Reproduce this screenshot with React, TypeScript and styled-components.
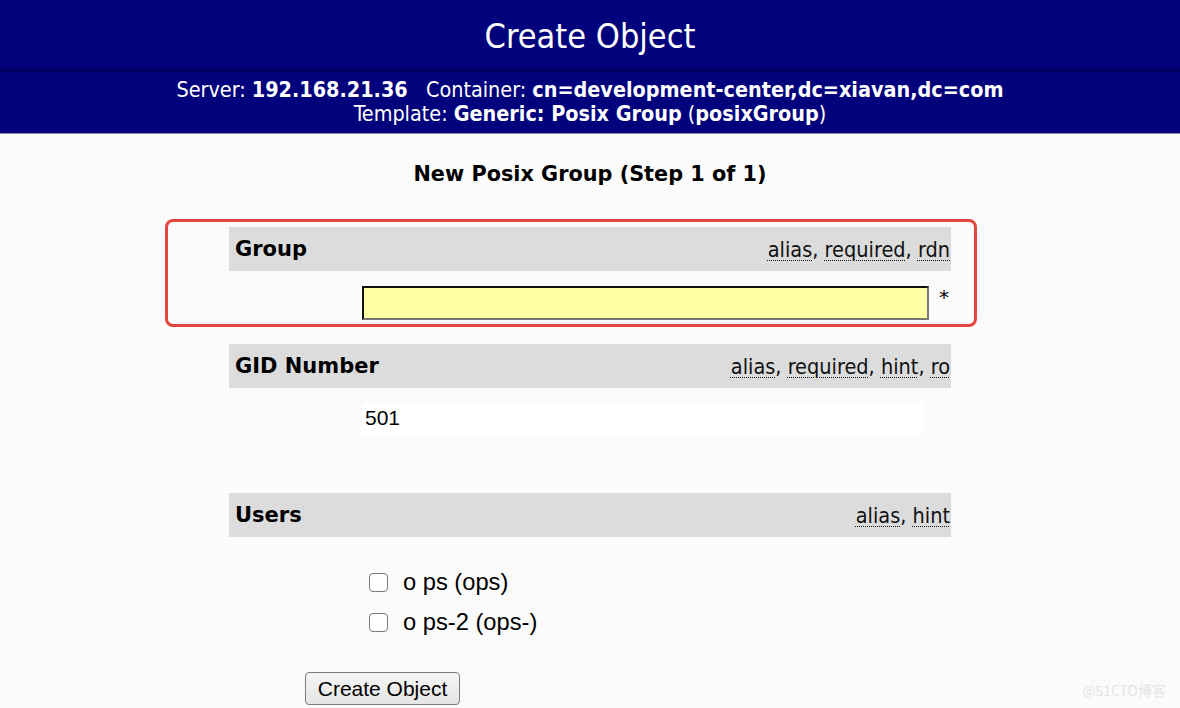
import React from "react";
import styled, { createGlobalStyle } from "styled-components";

const Global = createGlobalStyle`
  html, body { margin: 0; padding: 0; }
  body {
    background: #fbfbfb;
    font-family: "DejaVu Sans", Verdana, sans-serif;
    color: #000;
    width: 1180px;
    height: 708px;
    overflow: hidden;
  }
`;

const Page = styled.div`
  position: relative;
  width: 1180px;
  height: 708px;
`;

const Header = styled.header`
  display: flex;
  flex-direction: column;
  background: #02027c;
  color: #fff;
  border-bottom: 1px solid #8a8a9a;
`;

const TitleBar = styled.div`
  height: 68px;
  display: flex;
  align-items: center;
  justify-content: center;
  font-family: "DejaVu Sans Condensed", "DejaVu Sans", sans-serif;
  font-size: 34px;
  padding-top: 4px;
  box-sizing: border-box;
`;

const Divider = styled.div`
  height: 4px;
  background: linear-gradient(#00005a, #000066);
`;

const InfoBar = styled.div`
  height: 61px;
  box-sizing: border-box;
  padding-top: 6px;
  display: flex;
  flex-direction: column;
  align-items: center;
  font-family: "DejaVu Sans Condensed", "DejaVu Sans", sans-serif;
  font-size: 21.4px;
  line-height: 24px;
`;

const InfoLine = styled.div`
  white-space: pre;
  b { font-weight: bold; }
`;

const Main = styled.main`
  display: flex;
  flex-direction: column;
  align-items: center;
`;

const StepTitle = styled.h3`
  margin: 28px 0 0;
  font-size: 20.8px;
  line-height: 24px;
  font-weight: bold;
`;

const Form = styled.div`
  position: relative;
  width: 722px;
  margin-top: 41px;
  display: flex;
  flex-direction: column;
`;

const AttrHeader = styled.div`
  height: 44px;
  background: #dcdcdc;
  display: flex;
  align-items: center;
  justify-content: space-between;
  padding: 0 1px 0 6px;
  box-sizing: border-box;
  overflow: hidden;
`;

const AttrName = styled.span`
  font-weight: bold;
  font-size: 21px;
  white-space: nowrap;
`;

const AttrTags = styled.span`
  font-family: "DejaVu Sans Condensed", "DejaVu Sans", sans-serif;
  font-size: 21.5px;
  color: #111;
  white-space: nowrap;
`;

const Tag = styled.abbr`
  text-decoration: underline dotted;
  text-underline-offset: 3px;
  text-decoration-thickness: 1px;
`;

const ValueRow = styled.div<{ $top: number; $bottom: number }>`
  display: flex;
  align-items: center;
  padding: ${(p) => p.$top}px 0 ${(p) => p.$bottom}px 133px;
`;

const TextInput = styled.div`
  width: 567px;
  height: 34px;
  box-sizing: border-box;
  background: #ffffa3;
  border-style: solid;
  border-width: 2px;
  border-color: #111 #777 #777 #111;
`;

const Required = styled.span`
  align-self: flex-start;
  margin: 0 0 0 10px;
  font-size: 20px;
  line-height: 22px;
  font-family: "DejaVu Sans", sans-serif;
`;

const ReadOnly = styled.div`
  width: 563px;
  height: 32px;
  background: #fff;
  display: flex;
  align-items: center;
  padding-left: 3px;
  box-sizing: border-box;
  font-family: "Liberation Sans", Arial, sans-serif;
  font-size: 21px;
`;

const CheckList = styled.div`
  display: flex;
  flex-direction: column;
  padding: 25px 0 0 140px;
`;

const CheckRow = styled.label`
  height: 40px;
  display: flex;
  align-items: center;
  gap: 15px;
  font-family: "Liberation Sans", Arial, sans-serif;
  font-size: 23.7px;
`;

const CheckBox = styled.input.attrs({ type: "checkbox" })`
  appearance: none;
  margin: 0;
  width: 19px;
  height: 19px;
  border: 1.5px solid #7a7a7a;
  border-radius: 4px;
  background: #fff;
  box-sizing: border-box;
`;

const SubmitButton = styled.button`
  margin: 30px 0 0 76px;
  align-self: flex-start;
  width: 155px;
  height: 33px;
  font-family: "Liberation Sans", Arial, sans-serif;
  font-size: 21px;
  color: #000;
  background: linear-gradient(#f6f6f6, #e4e4e4);
  border: 1px solid #7c7c7c;
  border-radius: 4px;
  padding: 0;
`;

const Highlight = styled.div`
  position: absolute;
  left: -64px;
  top: -8px;
  width: 812px;
  height: 108px;
  box-sizing: border-box;
  border: 3px solid #e2463c;
  border-radius: 8px;
  pointer-events: none;
`;

const Watermark = styled.div`
  position: absolute;
  right: 14px;
  bottom: 8px;
  font-family: "Noto Sans CJK SC", sans-serif;
  font-size: 14px;
  color: #e4e4e4;
`;

export default function App() {
  return (
    <Page>
      <Global />
      <Header>
        <TitleBar>Create Object</TitleBar>
        <Divider />
        <InfoBar>
          <InfoLine>
            Server: <b>192.168.21.36</b>{"   "}Container: <b>cn=development-center,dc=xiavan,dc=com</b>
          </InfoLine>
          <InfoLine>
            Template: <b>Generic: Posix Group</b> (<b>posixGroup</b>)
          </InfoLine>
        </InfoBar>
      </Header>
      <Main>
        <StepTitle>New Posix Group (Step 1 of 1)</StepTitle>
        <Form>
          <AttrHeader>
            <AttrName>Group</AttrName>
            <AttrTags>
              <Tag>alias</Tag>, <Tag>required</Tag>, <Tag>rdn</Tag>
            </AttrTags>
          </AttrHeader>
          <ValueRow $top={15} $bottom={24}>
            <TextInput />
            <Required>*</Required>
          </ValueRow>
          <AttrHeader>
            <AttrName>GID Number</AttrName>
            <AttrTags>
              <Tag>alias</Tag>, <Tag>required</Tag>, <Tag>hint</Tag>, <Tag>ro</Tag>
            </AttrTags>
          </AttrHeader>
          <ValueRow $top={14} $bottom={59}>
            <ReadOnly>501</ReadOnly>
          </ValueRow>
          <AttrHeader>
            <AttrName>Users</AttrName>
            <AttrTags>
              <Tag>alias</Tag>, <Tag>hint</Tag>
            </AttrTags>
          </AttrHeader>
          <CheckList>
            <CheckRow>
              <CheckBox />o ps (ops)
            </CheckRow>
            <CheckRow>
              <CheckBox />o ps-2 (ops-)
            </CheckRow>
          </CheckList>
          <SubmitButton>Create Object</SubmitButton>
          <Highlight />
        </Form>
      </Main>
      <Watermark>@51CTO博客</Watermark>
    </Page>
  );
}
